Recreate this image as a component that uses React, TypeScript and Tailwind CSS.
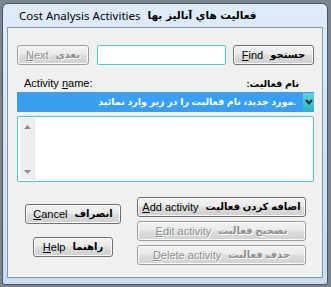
import React from 'react';

type BtnProps = { en: string; fa: string; disabled?: boolean; className?: string };

function WinButton({ en, fa, disabled, className = '' }: BtnProps) {
    return (
        <button
            type="button"
            className={`flex h-[20px] shrink-0 items-center justify-center gap-[7px] whitespace-nowrap rounded-[3px] border bg-[linear-gradient(to_bottom,#f3f3f3_0%,#ebebeb_45%,#dddddd_50%,#d0d0d0_100%)] text-[11px] leading-none shadow-[inset_0_0_0_1px_#fbfbfb] ${disabled ? 'border-[#9c9c9c] text-[#8e8e8e] [text-shadow:1px_1px_0_#ffffff]' : 'border-[#707070] text-black'} ${className}`}
        >
            <span>
                <u>{en[0]}</u>
                {en.slice(1)}
            </span>
            <span dir="rtl" className="text-[10px] font-bold">
                {fa}
            </span>
        </button>
    );
}

function Arrow({ up }: { up?: boolean }) {
    return (
        <svg width="7" height="4" viewBox="0 0 7 4">
            <path d={up ? 'M0 4 L3.5 0 L7 4 Z' : 'M0 0 L3.5 4 L7 0 Z'} fill="#8c8c8c" />
        </svg>
    );
}

export default function App() {
    return (
        <div className="h-[287px] w-[331px] overflow-hidden bg-[#7c858f] pl-[2px] pt-[3px] font-['Liberation_Sans','DejaVu_Sans',sans-serif]">
            <div className="flex h-[282px] w-[326px] flex-col rounded-t-[6px] rounded-b-[3px] border border-[#4b5561] bg-[linear-gradient(to_bottom,#dfebf8,#cadcf0)] px-[4px] pb-[6px]">
                {/* title bar */}
                <div className="flex h-[23px] items-center gap-[7px] whitespace-nowrap pl-[12px] font-['Noto_Sans','DejaVu_Sans',sans-serif] text-[11.5px] text-black">
                    <span>Cost Analysis Activities</span>
                    <span dir="rtl" className="font-['DejaVu_Sans',sans-serif] text-[10.5px] font-bold">
                        فعاليت هاي آناليز بها
                    </span>
                </div>

                {/* client area */}
                <div className="flex flex-1 flex-col border border-[#8898ab] bg-[#f0f0f0] pl-[9px] pr-[8px] pt-[17px]">
                    <div className="flex h-[20px] gap-[8px]">
                        <WinButton en="Next" fa="بعدي" disabled className="w-[72px]" />
                        <input
                            className="h-[20px] w-[129px] rounded-[2px] border border-[#5cc2c8] bg-white outline-none"
                            readOnly
                        />
                        <WinButton en="Find" fa="جستجو" className="ml-[-1px] w-[81px]" />
                    </div>

                    <div className="mt-[12px] flex h-[13px] items-center justify-between whitespace-nowrap pl-[7px] pr-[15px] text-[11px] leading-none text-black">
                        <span>
                            Activity <u>n</u>ame:
                        </span>
                        <span dir="rtl" className="text-[9.5px] font-bold">
                            نام فعاليت:
                        </span>
                    </div>

                    <div className="mt-[2px] flex h-[20px] items-center justify-end bg-[#3a9ff0]">
                        <span className="whitespace-nowrap pr-[7px] text-[9.5px] font-bold leading-none text-white">
                            مورد جديد، نام فعاليت را در زير وارد نمائيد.
                        </span>
                        <div className="flex h-[18px] w-[11px] items-center justify-center bg-[linear-gradient(to_bottom,#5fd6d8,#2eb4c0)]">
                            <svg width="8" height="6" viewBox="0 0 8 6">
                                <path d="M1 1 L4 4.5 L7 1" fill="none" stroke="#16264f" strokeWidth="2" />
                            </svg>
                        </div>
                    </div>

                    <div className="mt-[4px] flex h-[66px] rounded-[2px] border border-[#5cc2c8] bg-white pb-[1px] pl-[3px] pt-[1px]">
                        <div className="flex w-[14px] flex-col items-center justify-between border-r border-[#e4e4ea] bg-[#efeff3] pb-[6px] pt-[7px]">
                            <Arrow up />
                            <Arrow />
                        </div>
                    </div>

                    <div className="mt-[15px] flex gap-[8px]">
                        <div className="flex w-[112px] flex-col items-center gap-[13px] pt-[7px]">
                            <WinButton en="Cancel" fa="انصراف" className="w-[96px]" />
                            <WinButton en="Help" fa="راهنما" className="w-[80px]" />
                        </div>
                        <div className="flex w-[169px] flex-col gap-[4px]">
                            <WinButton en="Add activity" fa="اضافه كردن فعاليت" className="w-full" />
                            <WinButton en="Edit activity" fa="تصحيح فعاليت" disabled className="w-full" />
                            <WinButton en="Delete activity" fa="حذف فعاليت" disabled className="w-full" />
                        </div>
                    </div>
                </div>
            </div>
        </div>
    );
}
